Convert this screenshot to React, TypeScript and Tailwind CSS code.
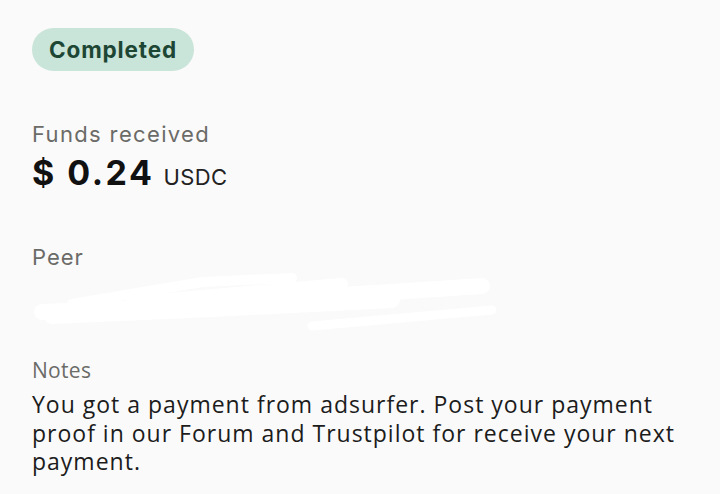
export default function App() {
  return (
    <div className="w-[720px] h-[494px] bg-[#fafafa] overflow-hidden" style={{ fontFamily: "Inter, 'Liberation Sans', sans-serif" }}>
      <div className="pl-[32px] pt-[28px] pr-[32px]">
        <span className="inline-flex items-center h-[43px] px-[17px] rounded-full bg-[#c9e4d8] text-[#1d4634] text-[22.5px] font-bold tracking-[0.85px]">
          Completed
        </span>

        <div className="mt-[50px]">
          <div className="text-[22px] leading-[26px] text-[#6b6b68] tracking-[1.35px]">Funds received</div>
          <div className="flex items-baseline gap-[9px] mt-[6px]">
            <span className="text-[34px] leading-[40px] font-bold text-[#111] tracking-[2.5px]">$ 0.24</span>
            <span className="text-[22px] text-[#222] tracking-[0.4px]">USDC</span>
          </div>
        </div>

        <div className="mt-[50px]">
          <div className="text-[22px] leading-[26px] text-[#6b6b68] tracking-[1px]">Peer</div>
          <svg width="500" height="70" viewBox="0 0 500 70" className="-ml-[20px] -mt-[6px] block">
            <g stroke="#ffffff" strokeLinecap="round" fill="none">
              <path d="M30 48 L180 42 L320 32 L470 22" strokeWidth="16" />
              <path d="M40 52 L200 45 L380 36" strokeWidth="16" />
              <path d="M60 40 L190 18 L280 14" strokeWidth="10" />
              <path d="M170 42 L360 28" strokeWidth="14" />
              <path d="M300 62 L480 46" strokeWidth="9" />
              <path d="M120 38 L330 20" strokeWidth="12" />
            </g>
          </svg>
        </div>

        <div className="mt-[23px]" style={{ fontFamily: "'Open Sans', sans-serif" }}>
          <div className="text-[21px] leading-[26px] text-[#6b6b68] tracking-[0.3px]">Notes</div>
          <p className="mt-[7px] text-[23px] leading-[28.5px] text-[#1c1c1c] tracking-[1px] w-[660px]">
            You got a payment from adsurfer. Post your payment proof in our Forum and Trustpilot for receive your next payment.
          </p>
        </div>
      </div>
    </div>
  );
}
